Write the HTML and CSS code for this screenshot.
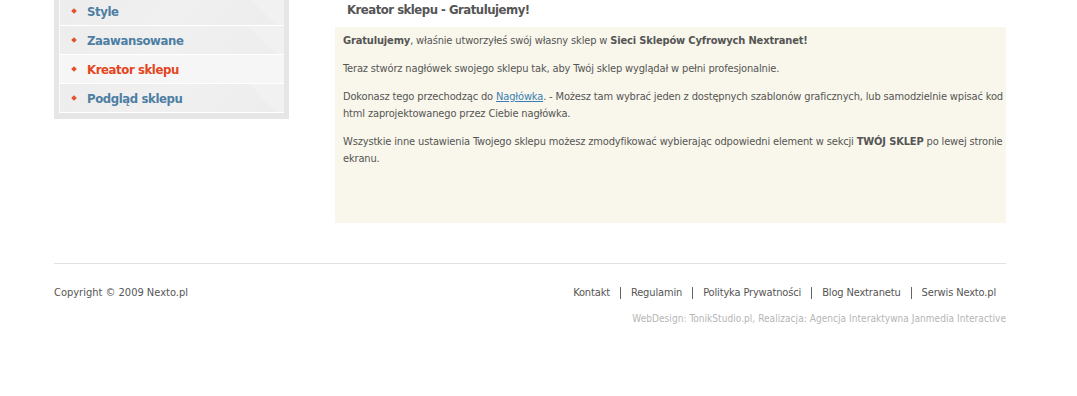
FILE: index.html
```html
<!DOCTYPE html>
<html lang="pl">
<head>
<meta charset="utf-8">
<link rel="stylesheet" href="styles.css">
</head>
<body>
<div class="page">
  <div class="columns">
    <aside class="sidebar">
      <ul class="menu">
        <li class="item"><span class="bullet"></span><a href="#">Style</a></li>
        <li class="item"><span class="bullet"></span><a href="#">Zaawansowane</a></li>
        <li class="item active"><span class="bullet"></span><a href="#">Kreator sklepu</a></li>
        <li class="item"><span class="bullet"></span><a href="#">Podgląd sklepu</a></li>
      </ul>
    </aside>
    <main class="main">
      <h1 class="title">Kreator sklepu - Gratulujemy!</h1>
      <div class="box">
        <p><b>Gratulujemy</b>, właśnie utworzyłeś swój własny sklep w <b>Sieci Sklepów Cyfrowych Nextranet!</b></p>
        <p>Teraz stwórz nagłówek swojego sklepu tak, aby Twój sklep wyglądał w pełni profesjonalnie.</p>
        <p>Dokonasz tego przechodząc do <a href="#">Nagłówka</a>. - Możesz tam wybrać jeden z dostępnych szablonów graficznych, lub samodzielnie wpisać kod html zaprojektowanego przez Ciebie nagłówka.</p>
        <p>Wszystkie inne ustawienia Twojego sklepu możesz zmodyfikować wybierając odpowiedni element w sekcji <b>TWÓJ SKLEP</b> po lewej stronie ekranu.</p>
      </div>
    </main>
  </div>
  <footer class="footer">
    <div class="footer-row">
      <span class="copy">Copyright © 2009 Nexto.pl</span>
      <nav class="links">
        <a href="#">Kontakt</a><a href="#">Regulamin</a><a href="#">Polityka Prywatności</a><a href="#">Blog Nextranetu</a><a href="#">Serwis Nexto.pl</a>
      </nav>
    </div>
    <div class="credits">WebDesign: TonikStudio.pl, Realizacja: Agencja Interaktywna Janmedia Interactive</div>
  </footer>
</div>
</body>
</html>
```

FILE: styles.css
```css
* { box-sizing: border-box; }
html, body { margin: 0; padding: 0; background: #fff; }
body {
  font-family: "DejaVu Sans Condensed", "DejaVu Sans", sans-serif;
  font-stretch: condensed;
  font-size: 11px;
  color: #555;
}
.page {
  width: 952px;
  margin: -3px 0 0 54px;
}
.columns {
  display: flex;
  gap: 46px;
  align-items: flex-start;
}
.sidebar {
  width: 235px;
  flex: none;
  background: #e6e6e6;
  padding: 0 5px 6px 5px;
}
.menu {
  list-style: none;
  margin: 0;
  padding: 0;
  border-left: 1px solid #fafafa;
}
.item {
  height: 29px;
  display: flex;
  align-items: center;
  padding-left: 12px;
  border-bottom: 1px solid #fff;
  background:
    linear-gradient(225deg, #f1f1f1 0 14%, transparent 14%),
    linear-gradient(135deg, #ededed 0%, #f0f0f0 50%, #ededed 100%);
}
.item.active { background: #f6f6f6; }
.bullet {
  width: 4px;
  height: 4px;
  background: #e0532d;
  transform: rotate(45deg);
  margin-right: 11px;
}
.item a {
  font-size: 13px;
  font-weight: bold;
  letter-spacing: -0.4px;
  color: #4d7ea3;
  text-decoration: none;
}
.item.active a { color: #e5451d; }
.main { flex: 1; }
.title {
  margin: 0;
  padding: 5px 0 0 12px;
  height: 30px;
  font-size: 13px;
  font-weight: bold;
  letter-spacing: -0.5px;
  color: #555;
}
.box {
  background: #f9f7eb;
  padding: 5px 0 8px 8px;
  min-height: 196px;
}
.box p {
  margin: 0 0 11px 0;
  line-height: 17px;
  letter-spacing: -0.15px;
}
.box b { color: #555; }
.box a { color: #3a7eb5; text-decoration: underline; }
.footer {
  margin-top: 40px;
  border-top: 1px solid #e2e2e2;
}
.footer-row {
  display: flex;
  justify-content: space-between;
  align-items: center;
  padding: 22px 10px 0 0;
}
.links { display: flex; align-items: center; }
.links a {
  color: #555;
  text-decoration: none;
  padding: 0 10px;
  border-left: 1px solid #666;
  line-height: 12px;
  letter-spacing: -0.15px;
}
.links a:first-child { border-left: none; }
.links a:last-child { padding-right: 0; }
.credits {
  text-align: right;
  color: #b5b5b5;
  font-size: 10px;
  letter-spacing: 0.05px;
  margin-top: 14px;
}
```
